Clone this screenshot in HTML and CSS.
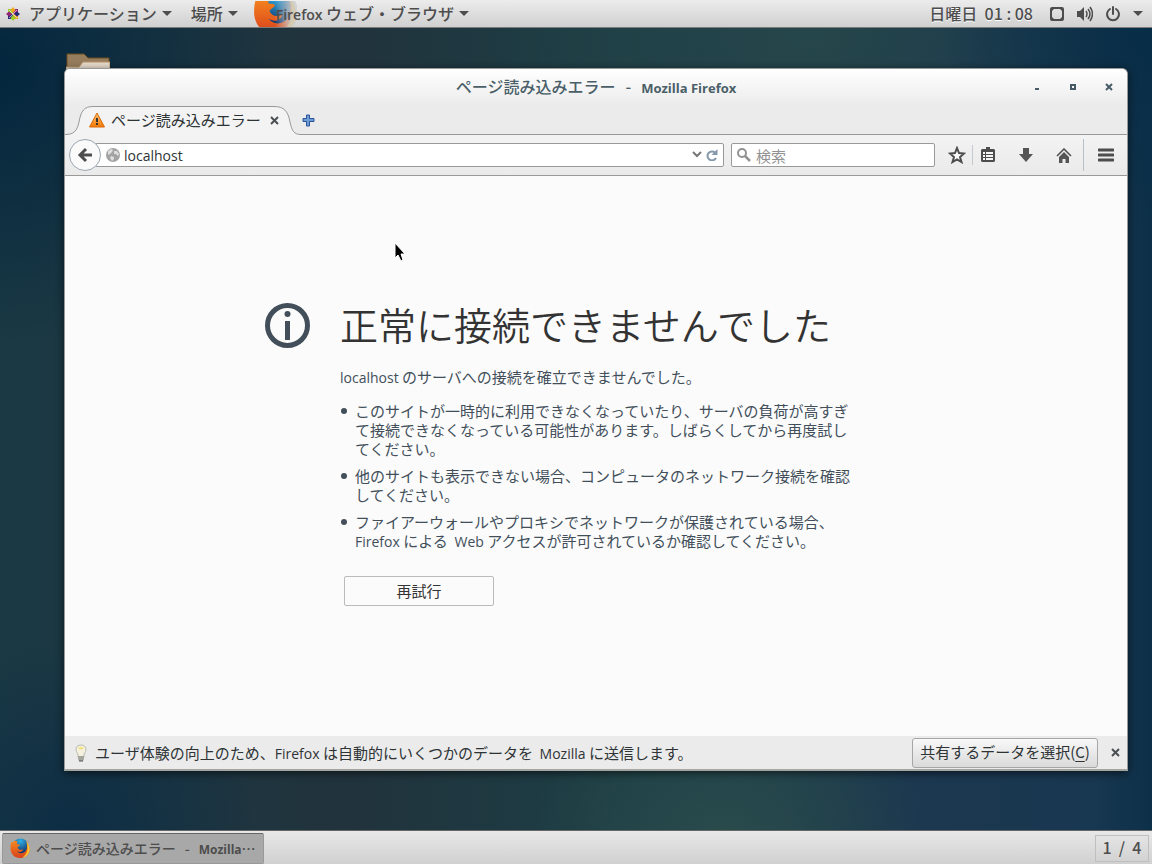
FILE: index.html
```
<!DOCTYPE html>
<html lang="ja">
<head>
    <meta charset="UTF-8">
    <meta name="viewport" content="width=device-width, initial-scale=1.0">
    <title>ページ読み込みエラー - Mozilla Firefox</title>
    <link rel="stylesheet" href="styles.css">
</head>
<body>
    <svg width="0" height="0" class="defs" aria-hidden="true">
        <defs>
            <linearGradient id="foxTail" x1="0" y1="0" x2="0" y2="1">
                <stop offset="0" stop-color="#f58a1f"/>
                <stop offset="1" stop-color="#d9401c"/>
            </linearGradient>
            <radialGradient id="foxGlobe" cx="0.5" cy="0.15" r="0.7">
                <stop offset="0" stop-color="#2fb0e6"/>
                <stop offset="1" stop-color="#123a72"/>
            </radialGradient>
            <linearGradient id="foxFade" x1="0" y1="0" x2="1" y2="0">
                <stop offset="0.5" stop-color="#d2d2d2" stop-opacity="0"/>
                <stop offset="0.8" stop-color="#c8c8c8" stop-opacity="0.8"/>
                <stop offset="1" stop-color="#d2d2d2" stop-opacity="0.9"/>
            </linearGradient>
            <linearGradient id="warnFill" x1="0" y1="0" x2="0" y2="1">
                <stop offset="0" stop-color="#ffc274"/>
                <stop offset="1" stop-color="#f57900"/>
            </linearGradient>
            <symbol id="firefox" viewBox="0 0 40 40">
                <circle cx="21" cy="17" r="16" fill="url(#foxGlobe)"/>
                <path d="M3 7C4 9 5 9 6 8C9 5 12 5 15 7C14 9 14 11 14 12C16 13 19 12 20 14C19 16 16 17 15 19C17 24 22 25 27 22C25 29 18 29 14 26C18 32 28 32 32 25C35 20 35 12 32 7C38 12 41 21 38 29C34 37 27 40 20 40C9 40 1 32 1 20C1 14 2 10 3 7Z" fill="url(#foxTail)"/>
                <path d="M32 6C38 12 41 22 38 29C35 35 31 38 25 39C32 34 36 27 35 18C35 13 34 9 32 6Z" fill="#fcc42e"/>
            </symbol>
        </defs>
    </svg>

    <header class="panel">
        <nav class="panel-menu">
            <button class="panel-item">
                <svg width="14" height="14" viewBox="0 0 14 14">
                    <path d="M2 2h5v5H2z" fill="#9ccd2a"/>
                    <path d="M7 2h5v5H7z" fill="#932279"/>
                    <path d="M7 7h5v5H7z" fill="#efa724"/>
                    <path d="M2 7h5v5H2z" fill="#262577"/>
                    <path d="M7 0l2.500 3L7 6 4.500 3z" fill="#efa724"/>
                    <path d="M14 7l-3 2.500L8 7l3-2.500z" fill="#262577"/>
                    <path d="M7 14l-2.500-3L7 8l2.500 3z" fill="#9ccd2a"/>
                    <path d="M0 7l3-2.500L6 7 3 9.500z" fill="#932279"/>
                    <path d="M3 3l8 8M11 3l-8 8" stroke="#fff" stroke-width="1" opacity="0.6"/>
                </svg>
                <span class="apps">アプリケーション</span>
                <i class="caret"></i>
            </button>
            <button class="panel-item">場所<i class="caret"></i></button>
            <button class="panel-item app-menu">
                <svg class="app-icon" width="44" height="26" viewBox="0 0 44 26">
                    <use href="#firefox" width="44" height="44" x="0" y="-11"/>
                    <circle cx="22" cy="11" r="23" fill="url(#foxFade)"/>
                </svg>
                <span><span class="en">Firefox</span> ウェブ・ブラウザ</span>
                <i class="caret"></i>
            </button>
        </nav>
        <div class="panel-status">
            <span class="clock">日曜日&nbsp; 01 : 08</span>
            <svg width="16" height="16" viewBox="0 0 16 16">
                <rect x="2" y="2" width="12" height="12" rx="1" fill="none" stroke="#4d4d4d" stroke-width="2"/>
                <path d="M2 2h4L2 6zM14 2v4l-4-4zM2 14v-4l4 4zM14 14h-4l4-4z" fill="#4d4d4d"/>
            </svg>
            <svg width="16" height="16" viewBox="0 0 16 16">
                <path d="M0 5h3l4-4v14l-4-4H0z" fill="#4d4d4d"/>
                <path d="M9 5q2 3 0 6M11 3q4 5 0 10M13 1q5 7 0 14" fill="none" stroke="#4d4d4d" stroke-width="1.500"/>
            </svg>
            <svg width="16" height="16" viewBox="0 0 16 16">
                <path d="M5 3a6 6 0 1 0 6 0M8 1v7" fill="none" stroke="#4d4d4d" stroke-width="2" stroke-linecap="round"/>
            </svg>
            <i class="caret"></i>
        </div>
    </header>

    <main class="desktop">
        <svg class="folder" width="44" height="40" viewBox="0 0 44 40">
            <path d="M1 40V1h17l4 4h21v35z" fill="#957d5d" stroke="#6d4d1c"/>
            <path d="M0 40V14h13l4-5h27v31z" fill="#e9dccd" stroke="#b89468"/>
        </svg>

        <section class="window">
            <div class="titlebar">
                <h1>ページ読み込みエラー<span class="dash">-</span><span class="en">Mozilla Firefox</span></h1>
                <div class="window-buttons">
                    <button aria-label="最小化"><svg width="8" height="8"><path d="M2 5h4v2H2z" fill="#475c66"/></svg></button>
                    <button aria-label="最大化"><svg width="8" height="8"><path d="M2 2h4v4H2z" fill="none" stroke="#475c66" stroke-width="2"/></svg></button>
                    <button aria-label="閉じる"><svg width="8" height="8"><path d="M1 1l6 6M7 1L1 7" stroke="#475c66" stroke-width="2"/></svg></button>
                </div>
            </div>

            <div class="tabs">
                <div class="tab">
                    <svg class="tab-shape" width="236" height="30" viewBox="0 0 236 30">
                        <path d="M0 28.500C9 28.500 12 25 14 16C16 5 19 .5 28 .5H209C219 .5 223 5 225 16C227 25 229 28.500 236 28.500V30H0" fill="#f3f3f3"/>
                        <path d="M0 28.500C9 28.500 12 25 14 16C16 5 19 .5 28 .5H209C219 .5 223 5 225 16C227 25 229 28.500 236 28.500" fill="none" stroke="#999"/>
                    </svg>
                    <svg width="16" height="16" viewBox="0 0 16 16">
                        <path d="M8 1L15.500 15H.5z" fill="url(#warnFill)" stroke="#d96a0b" stroke-linejoin="round"/>
                        <path d="M8 6v4M8 11v2" stroke="#333" stroke-width="2"/>
                    </svg>
                    <span>ページ読み込みエラー</span>
                    <button aria-label="タブを閉じる"><svg width="9" height="9"><path d="M1 1l7 7M8 1L1 8" stroke="#4a4f51" stroke-width="2"/></svg></button>
                </div>
                <button class="new-tab" aria-label="新しいタブ">
                    <svg width="13" height="13" viewBox="0 0 13 13"><path d="M4.500 1h3v3.500H12v3H7.500V12h-3V7.500H1v-3h3.500z" fill="#6d9bd4" stroke="#2b559b"/></svg>
                </button>
            </div>

            <div class="toolbar">
                <button class="back" aria-label="戻る">
                    <svg width="16" height="16" viewBox="0 0 16 16"><path d="M9 2L3 8l6 6M3 8h12" fill="none" stroke="#4d4d4d" stroke-width="3"/></svg>
                </button>
                <div class="field urlbar">
                    <svg width="14" height="14" viewBox="0 0 14 14">
                        <circle cx="7" cy="7" r="7" fill="#a3a3a3"/>
                        <path d="M2 3l3-2 2 1-1 2-2 2-2 1zM8 3l3 0 2 3-1 2-2-2-2 0zM5 8l3 1 0 2-2 2-2-3z" fill="#dedede"/>
                    </svg>
                    <input class="en" type="text" value="localhost" aria-label="アドレス">
                    <svg width="10" height="8" viewBox="0 0 10 8"><path d="M1 1l4 4 4-4" fill="none" stroke="#777" stroke-width="2"/></svg>
                    <svg width="12" height="12" viewBox="0 0 12 12">
                        <path d="M9 3.500A4.500 4.500 0 1 0 10 9" fill="none" stroke="#8698ab" stroke-width="2"/>
                        <path d="M11.500 0v6h-6z" fill="#8698ab"/>
                    </svg>
                </div>
                <div class="field search">
                    <svg width="14" height="14" viewBox="0 0 14 14"><circle cx="5" cy="5" r="4" fill="none" stroke="#929292" stroke-width="2"/><path d="M8 8l5 5" stroke="#929292" stroke-width="2.500"/></svg>
                    <input type="text" placeholder="検索" aria-label="検索">
                </div>
                <div class="tools">
                    <button aria-label="ブックマーク">
                        <svg width="18" height="18" viewBox="0 0 18 18"><path d="M9 2l2 5 5 .5-4 3.500 1.500 5L9 13.300 4.500 16 6 11 2 7.500 7 7z" fill="#fafafa" stroke="#4d4d4d" stroke-width="2"/></svg>
                    </button>
                    <button class="split" aria-label="ブックマーク一覧">
                        <svg width="14" height="16" viewBox="0 0 14 16"><path d="M5 0h4v2h4l1 1v11l-1 1H1l-1-1V3l1-1h4z" fill="#4d4d4d"/><path d="M2 5h2v2H2zM5 5h7v2H5zM2 8h2v2H2zM5 8h7v2H5zM2 11h2v2H2zM5 11h7v2H5z" fill="#f5f5f5"/></svg>
                    </button>
                    <button aria-label="ダウンロード">
                        <svg width="14" height="14" viewBox="0 0 14 14"><path d="M4 0h6v6h4l-7 8-7-8h4z" fill="#555"/></svg>
                    </button>
                    <button aria-label="ホーム">
                        <svg width="16" height="15" viewBox="0 0 16 15"><path d="M1 8l7-7 7 7" fill="none" stroke="#4d4d4d" stroke-width="1.500"/><path d="M3 9l5-5 5 5v6H9.500v-4h-3v4H3z" fill="#555"/></svg>
                    </button>
                    <button class="menu" aria-label="メニュー">
                        <svg width="16" height="14" viewBox="0 0 16 14"><path d="M1 2h14M1 7h14M1 12h14" stroke="#4d4d4d" stroke-width="3" stroke-linecap="round"/></svg>
                    </button>
                </div>
            </div>

            <article class="page">
                <svg class="info" width="45" height="45" viewBox="0 0 45 45">
                    <circle cx="22.500" cy="22.500" r="20" fill="none" stroke="#424f5a" stroke-width="5"/>
                    <circle cx="22.500" cy="11" r="3" fill="#424f5a"/>
                    <path d="M20 18h5v19h-5z" fill="#424f5a"/>
                </svg>
                <div class="message">
                    <h2>正常に接続できませんでした</h2>
                    <p><span class="en">localhost</span> のサーバへの接続を確立できませんでした。</p>
                    <ul>
                        <li>このサイトが一時的に利用できなくなっていたり、サーバの負荷が高すぎて接続できなくなっている可能性があります。しばらくしてから再度試してください。</li>
                        <li>他のサイトも表示できない場合、コンピュータのネットワーク接続を確認してください。</li>
                        <li>ファイアーウォールやプロキシでネットワークが保護されている場合、<span class="en">Firefox</span> による&nbsp; <span class="en">Web</span> アクセスが許可されているか確認してください。</li>
                    </ul>
                    <button class="retry">再試行</button>
                </div>
            </article>

            <div class="notice">
                <svg width="12" height="18" viewBox="0 0 12 18">
                    <path d="M3 10C0 7 0 1 6 1s6 6 3 9v3H3z" fill="#f4f2df" stroke="#b9b9b0"/>
                    <path d="M3 4q3-2 6 0-3 3-6 0" fill="#f3e27a"/>
                    <path d="M3 12h6v3l-1 2H4l-1-2z" fill="#a5a5a0"/>
                    <path d="M4 17h4" stroke="#555"/>
                </svg>
                <span class="notice-text">ユーザ体験の向上のため、<span class="en">Firefox</span> は自動的にいくつかのデータを&nbsp; <span class="en">Mozilla</span> に送信します。</span>
                <button class="choose">共有するデータを選択(<u>C</u>)</button>
                <button aria-label="閉じる"><svg width="9" height="9"><path d="M1 1l7 7M8 1L1 8" stroke="#4a4f51" stroke-width="2"/></svg></button>
            </div>
        </section>

        <svg class="cursor" width="14" height="20" viewBox="0 0 14 20">
            <path d="M1 1v15l3-3 3 6 2-1-2-6h4z" fill="#000" stroke="#fff"/>
        </svg>
    </main>

    <footer class="taskbar">
        <button class="task">
            <svg width="20" height="20"><use href="#firefox" width="20" height="20"/></svg>
            <span>ページ読み込みエラー<span class="dash">-</span><span class="en">Mozilla</span>…</span>
        </button>
        <button class="workspace">1&nbsp; /&nbsp; 4</button>
    </footer>
</body>
</html>
```
FILE: styles.css
```
* {
    box-sizing: border-box;
}
body {
    display: flex;
    flex-direction: column;
    min-height: 100vh;
    margin: 0;
    font-family: "Noto Sans CJK JP", sans-serif;
    font-size: 15px;
    color: #2e3436;
    background-color: #1b3645;
}
button, input {
    margin: 0;
    padding: 0;
    border: none;
    background: none;
    font: inherit;
    color: inherit;
}
svg {
    display: block;
    flex: none;
}
.defs {
    position: absolute;
}
.en {
    font-family: "Open Sans", "Noto Sans CJK JP", sans-serif;
    font-size: 14px;
}
.dash {
    margin: 0 9px;
}

/* top panel */
.panel {
    display: flex;
    justify-content: space-between;
    height: 28px;
    padding: 0 9px 0 6px;
    border-bottom: 1px solid #7c7c7c;
    background: linear-gradient(#ececec, #d0d0d0);
    font-size: 16px;
    font-weight: 500;
    line-height: 25px;
    color: #4d4d4d;
    text-shadow: 0 1px #fff;
}
.panel-menu, .panel-status, .panel-item {
    display: flex;
    align-items: center;
}
.panel-menu {
    gap: 19px;
}
.panel-item {
    gap: 5px;
}
.apps {
    margin-left: 4px;
}
.app-menu {
    position: relative;
    padding-left: 19px;
}
.app-menu .en {
    font-weight: 600;
}
.app-menu span {
    position: relative;
}
.app-icon {
    position: absolute;
    left: -4px;
    top: 0;
}
.caret {
    border: 5px solid transparent;
    border-top-color: #4d4d4d;
    border-bottom: none;
}
.panel-status {
    gap: 12px;
}
.clock {
    margin-right: 4px;
}

/* desktop */
.desktop {
    position: relative;
    display: flex;
    flex: 1;
    padding: 40px 24px 59px 64px;
    background:
        radial-gradient(circle at 0 5%, #04263e, transparent 20%),
        radial-gradient(circle at 100% 0, #082d46, transparent 15%),
        radial-gradient(circle at 6% 100%, #0d2d45, transparent 14%),
        radial-gradient(circle at 63% 102%, #2a4c4c, transparent 18%),
        radial-gradient(circle at 70% 0, #25464a, transparent 28%),
        linear-gradient(90deg, #1a3944, #21333d 30%, #1c3e45 55%, #1c3850 80%, #183750 95%, #0d3049);
}
.folder {
    position: absolute;
    left: 66px;
    top: 25px;
}
.cursor {
    position: absolute;
    left: 394px;
    top: 214px;
}
.window {
    position: relative;
    display: flex;
    flex: 1;
    flex-direction: column;
    border: 1px solid #999;
    border-bottom: 2px solid #a5a5a2;
    border-radius: 6px 6px 0 0;
    background-color: #ebebeb;
    box-shadow: 0 2px 8px rgba(0, 0, 0, 0.6);
}
.titlebar {
    position: relative;
    display: flex;
    align-items: center;
    justify-content: center;
    height: 37px;
    padding-bottom: 2px;
    border-radius: 5px 5px 0 0;
    background: linear-gradient(#fff, #ebebeb);
    color: #4a5f68;
}
.titlebar h1 {
    margin: 0;
    font-size: 16px;
    font-weight: 500;
    line-height: 24px;
}
.titlebar .dash {
    margin: 0 10px;
}
.titlebar .en {
    font-size: 13px;
    font-weight: 700;
}
.window-buttons {
    position: absolute;
    right: 14px;
    display: flex;
    gap: 28px;
}

/* tabs */
.tabs {
    display: flex;
    align-items: center;
    height: 29px;
    border-bottom: 1px solid #999;
}
.tab {
    position: relative;
    display: flex;
    align-items: center;
    gap: 6px;
    width: 228px;
    height: 29px;
    padding-left: 24px;
    line-height: 22px;
}
.tab > * {
    position: relative;
}
.tab button {
    margin-left: 3px;
}
.tab .tab-shape {
    position: absolute;
    left: 0;
    top: 0;
}
.new-tab {
    margin-left: 9px;
}

/* navigation */
.toolbar {
    display: flex;
    align-items: center;
    height: 41px;
    padding: 0 0 0 4px;
    border-bottom: 1px solid #999;
    background: linear-gradient(#f3f3f3, #eaeaea);
}
.back {
    display: flex;
    align-items: center;
    justify-content: center;
    z-index: 1;
    width: 32px;
    height: 32px;
    border: 1px solid #9aa5b0;
    border-radius: 50%;
    background-color: #fafafa;
}
.field {
    display: flex;
    align-items: center;
    height: 24px;
    border: 1px solid #999;
    border-radius: 2px;
    background-color: #fff;
}
.field input {
    flex: 1;
    min-width: 0;
    height: 22px;
    outline: none;
}
.urlbar {
    flex: 1;
    gap: 4px;
    margin-left: -6px;
    padding: 0 5px 0 10px;
}
.search {
    gap: 5px;
    width: 204px;
    margin: 0 7px;
    padding: 0 5px;
}
.search input::placeholder {
    color: #929292;
}
.tools {
    display: flex;
    align-items: center;
}
.tools button {
    display: flex;
    align-items: center;
    justify-content: center;
    width: 38px;
    height: 20px;
}
.tools button:first-child {
    width: 30px;
}
.tools .split {
    width: 31px;
    margin-right: 4px;
    border-left: 1px solid #c5cad0;
}
.tools .menu {
    width: 44px;
    height: 32px;
    border-left: 1px solid #b5c0cb;
}

/* error page */
.page {
    display: grid;
    grid-template-columns: 1fr minmax(0, 512px) 1fr;
    align-content: center;
    flex: 1;
    padding-bottom: 8px;
    background-color: #fbfbfb;
    color: #424f5a;
}
.info {
    justify-self: end;
    margin: 4px 30px 0 0;
}
.message h2 {
    margin: 0 0 18px;
    font-size: 38px;
    font-weight: 350;
    line-height: 50px;
    color: #333;
}
.message p {
    margin: 0 0 14px;
    line-height: 19px;
}
.message ul {
    margin: 0 0 25px;
    padding: 0;
    list-style: none;
}
.message li {
    position: relative;
    margin-bottom: 8px;
    padding-left: 15px;
    line-height: 19px;
}
.message li::before {
    content: "";
    position: absolute;
    left: 1px;
    top: 7px;
    width: 6px;
    height: 6px;
    border-radius: 50%;
    background-color: #424f5a;
}
.message li:last-child {
    margin-bottom: 0;
}
.retry {
    width: 150px;
    height: 30px;
    margin-left: 4px;
    border: 1px solid #bbb;
    border-radius: 2px;
    line-height: 28px;
    color: #333;
}

/* notification bar */
.notice {
    display: flex;
    align-items: center;
    height: 33px;
    padding: 0 7px 0 10px;
    background-color: #ebebeb;
}
.notice-text {
    flex: 1;
    margin-left: 8px;
}
.choose {
    width: 186px;
    height: 30px;
    margin-right: 13px;
    padding-bottom: 2px;
    border: 1px solid #a6a6a6;
    border-radius: 3px;
    background: linear-gradient(#f8f8f8, #dadada);
    white-space: nowrap;
}
.choose u {
    text-underline-offset: 3px;
}

/* bottom panel */
.taskbar {
    display: flex;
    align-items: center;
    justify-content: space-between;
    height: 34px;
    padding: 1px 3px 0 2px;
    border-top: 1px solid #666;
    background: linear-gradient(#e8e8e8, #d0d0d0);
    color: #4d4d4d;
}
.task {
    display: flex;
    align-items: center;
    gap: 6px;
    width: 262px;
    height: 31px;
    padding-left: 7px;
    border: 1px solid #999;
    border-top-color: #666;
    border-radius: 2px;
    background-color: #a8a8a8;
    font-size: 14px;
    font-weight: 500;
    white-space: nowrap;
}
.task .en {
    font-size: 12px;
    font-weight: 700;
}
.workspace {
    width: 54px;
    height: 27px;
    padding-bottom: 2px;
    border: 1px solid #bfbfbf;
    font-size: 16px;
    font-weight: 500;
    line-height: 23px;
}
```
